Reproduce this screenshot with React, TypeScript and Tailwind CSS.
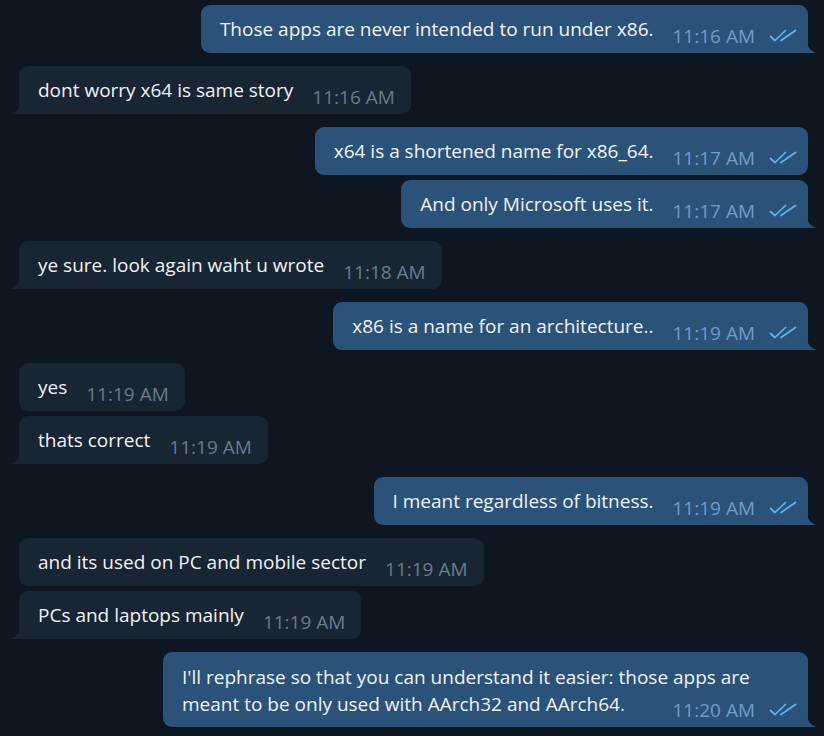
import React from 'react';

type Message = {
  id: number;
  out: boolean;
  text: string;
  time: string;
  tail: boolean;
  gap: 'group' | 'same';
  wide?: boolean;
};

const messages: Message[] = [
  { id: 1, out: true, text: 'Those apps are never intended to run under x86.', time: '11:16 AM', tail: true, gap: 'group' },
  { id: 2, out: false, text: 'dont worry x64 is same story', time: '11:16 AM', tail: true, gap: 'group' },
  { id: 3, out: true, text: 'x64 is a shortened name for x86_64.', time: '11:17 AM', tail: false, gap: 'group' },
  { id: 4, out: true, text: 'And only Microsoft uses it.', time: '11:17 AM', tail: true, gap: 'same' },
  { id: 5, out: false, text: 'ye sure. look again waht u wrote', time: '11:18 AM', tail: true, gap: 'group' },
  { id: 6, out: true, text: 'x86 is a name for an architecture..', time: '11:19 AM', tail: true, gap: 'group' },
  { id: 7, out: false, text: 'yes', time: '11:19 AM', tail: false, gap: 'group' },
  { id: 8, out: false, text: 'thats correct', time: '11:19 AM', tail: true, gap: 'same' },
  { id: 9, out: true, text: 'I meant regardless of bitness.', time: '11:19 AM', tail: true, gap: 'group' },
  { id: 10, out: false, text: 'and its used on PC and mobile sector', time: '11:19 AM', tail: false, gap: 'group' },
  { id: 11, out: false, text: 'PCs and laptops mainly', time: '11:19 AM', tail: true, gap: 'same' },
  {
    id: 12,
    out: true,
    text: "I'll rephrase so that you can understand it easier: those apps are meant to be only used with AArch32 and AArch64.",
    time: '11:20 AM',
    tail: true,
    gap: 'group',
    wide: true,
  },
];

const DoubleCheck = () => (
  <svg width="28" height="16" viewBox="0 0 28 16" fill="none" className="shrink-0">
    <path d="M1.5 8.5 L6 12.5 L16.5 2.5" stroke="#5fb4f0" strokeWidth="1.7" strokeLinecap="round" strokeLinejoin="round" />
    <path d="M12 12.5 L26.5 2.5" stroke="#5fb4f0" strokeWidth="1.7" strokeLinecap="round" />
  </svg>
);

// bubble tail, drawn at the bottom corner of the last message in a group
const Tail = ({ out }: { out: boolean }) =>
  out ? (
    <svg width="10" height="14" viewBox="0 0 10 14" className="absolute bottom-0 right-[-9px]">
      <path d="M0 0 C0 8 3 12 10 14 L0 14 Z" fill="#2b5278" />
    </svg>
  ) : (
    <svg width="10" height="14" viewBox="0 0 10 14" className="absolute bottom-0 left-[-9px]">
      <path d="M10 0 C10 8 7 12 0 14 L10 14 Z" fill="#182533" />
    </svg>
  );

const Meta = ({ out, time }: { out: boolean; time: string }) => (
  <span className="flex items-center gap-[14px]">
    <span className={`leading-[20px] ${out ? 'text-[#6f9cc9]' : 'text-[#6a7b8b]'}`}>{time}</span>
    {out && <DoubleCheck />}
  </span>
);

const Bubble = ({ msg }: { msg: Message }) => {
  const base = msg.out ? 'bg-[#2b5278]' : 'bg-[#182533]';
  const corner = msg.tail ? (msg.out ? 'rounded-br-none' : 'rounded-bl-none') : '';

  if (msg.wide) {
    // long text wraps; the time floats right on the last line
    return (
      <div className={`relative w-[645px] rounded-[9px] ${base} ${corner} pl-[19px] pr-[11px] pt-[12px] pb-[7px]`}>
        <p className="leading-[27px] flow-root">
          {msg.text}
          <span className="float-right flex mt-[9px] ml-[19px]">
            <Meta out={msg.out} time={msg.time} />
          </span>
        </p>
        {msg.tail && <Tail out={msg.out} />}
      </div>
    );
  }

  return (
    <div
      className={`relative flex items-end gap-[19px] rounded-[9px] ${base} ${corner} pl-[19px] ${
        msg.out ? 'pr-[11px]' : 'pr-[16px]'
      } pt-[11px] pb-[7px]`}
    >
      <p className="leading-[27px] whitespace-nowrap pb-[3px]">{msg.text}</p>
      <Meta out={msg.out} time={msg.time} />
      {msg.tail && <Tail out={msg.out} />}
    </div>
  );
};

export default function App() {
  return (
    <div
      className="w-[824px] h-[736px] overflow-hidden bg-[#0e1621] text-[#f0f3f5] text-[19px] pt-[5px] flex flex-col"
      style={{ fontFamily: '"Open Sans", "Noto Sans", sans-serif' }}
    >
      {messages.map((msg, i) => (
        <div
          key={msg.id}
          className={`flex ${msg.out ? 'justify-end pr-[16px]' : 'justify-start pl-[19px]'} ${
            i === 0 ? '' : msg.gap === 'same' ? 'mt-[5px]' : 'mt-[13px]'
          }`}
        >
          <Bubble msg={msg} />
        </div>
      ))}
    </div>
  );
}
